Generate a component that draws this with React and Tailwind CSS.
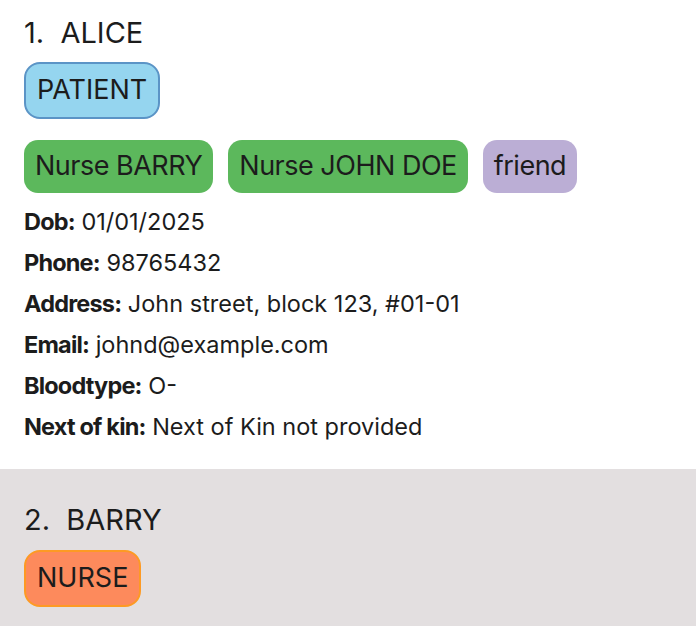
import React from 'react';

const details = [
  ['Dob:', '01/01/2025'],
  ['Phone:', '98765432'],
  ['Address:', 'John street, block 123, #01-01'],
  ['Email:', 'johnd@example.com'],
  ['Bloodtype:', 'O-'],
  ['Next of kin:', 'Next of Kin not provided'],
];

const Tag = ({ className, children }) => (
  <span className={`inline-flex items-center h-[53px] px-[11px] rounded-[14px] text-[27px] tracking-[-0.5px] text-[#1c1c1c] ${className}`}>
    {children}
  </span>
);

export default function App() {
  return (
    <div className="w-[696px] h-[626px] overflow-hidden bg-[#e3dfe0] font-['Inter']">
      {/* first person */}
      <div className="bg-white h-[469px] pl-6 pt-[14px]">
        <h2 className="text-[29px] leading-[38px] text-[#1c1c1c] whitespace-pre">1.  ALICE</h2>
        <div className="mt-[10px]">
          <span className="inline-flex items-center h-[57px] px-[11px] rounded-[16px] border-2 border-[#5b94c6] bg-[#95d5ef] text-[27px] text-[#1c1c1c]">
            PATIENT
          </span>
        </div>
        <div className="flex gap-[15px] mt-[21px]">
          <Tag className="bg-[#5cb85c]">Nurse BARRY</Tag>
          <Tag className="bg-[#5cb85c]">Nurse JOHN DOE</Tag>
          <Tag className="bg-[#bbaed5]">friend</Tag>
        </div>
        <div className="mt-[8px] text-[23.5px] leading-[41px] text-[#1c1c1c]">
          {details.map(([k, v]) => (
            <div key={k}>
              <span className="font-bold tracking-[-0.035em]">{k}</span> {v}
            </div>
          ))}
        </div>
      </div>
      {/* second person */}
      <div className="pl-6 pt-[32px]">
        <h2 className="text-[29px] leading-[38px] text-[#1c1c1c] whitespace-pre">2.  BARRY</h2>
        <div className="mt-[11px]">
          <span className="inline-flex items-center h-[57px] px-[11px] rounded-[16px] border-2 border-[#fd9a24] bg-[#fd8a5c] text-[27px] text-[#1c1c1c]">
            NURSE
          </span>
        </div>
      </div>
    </div>
  );
}
